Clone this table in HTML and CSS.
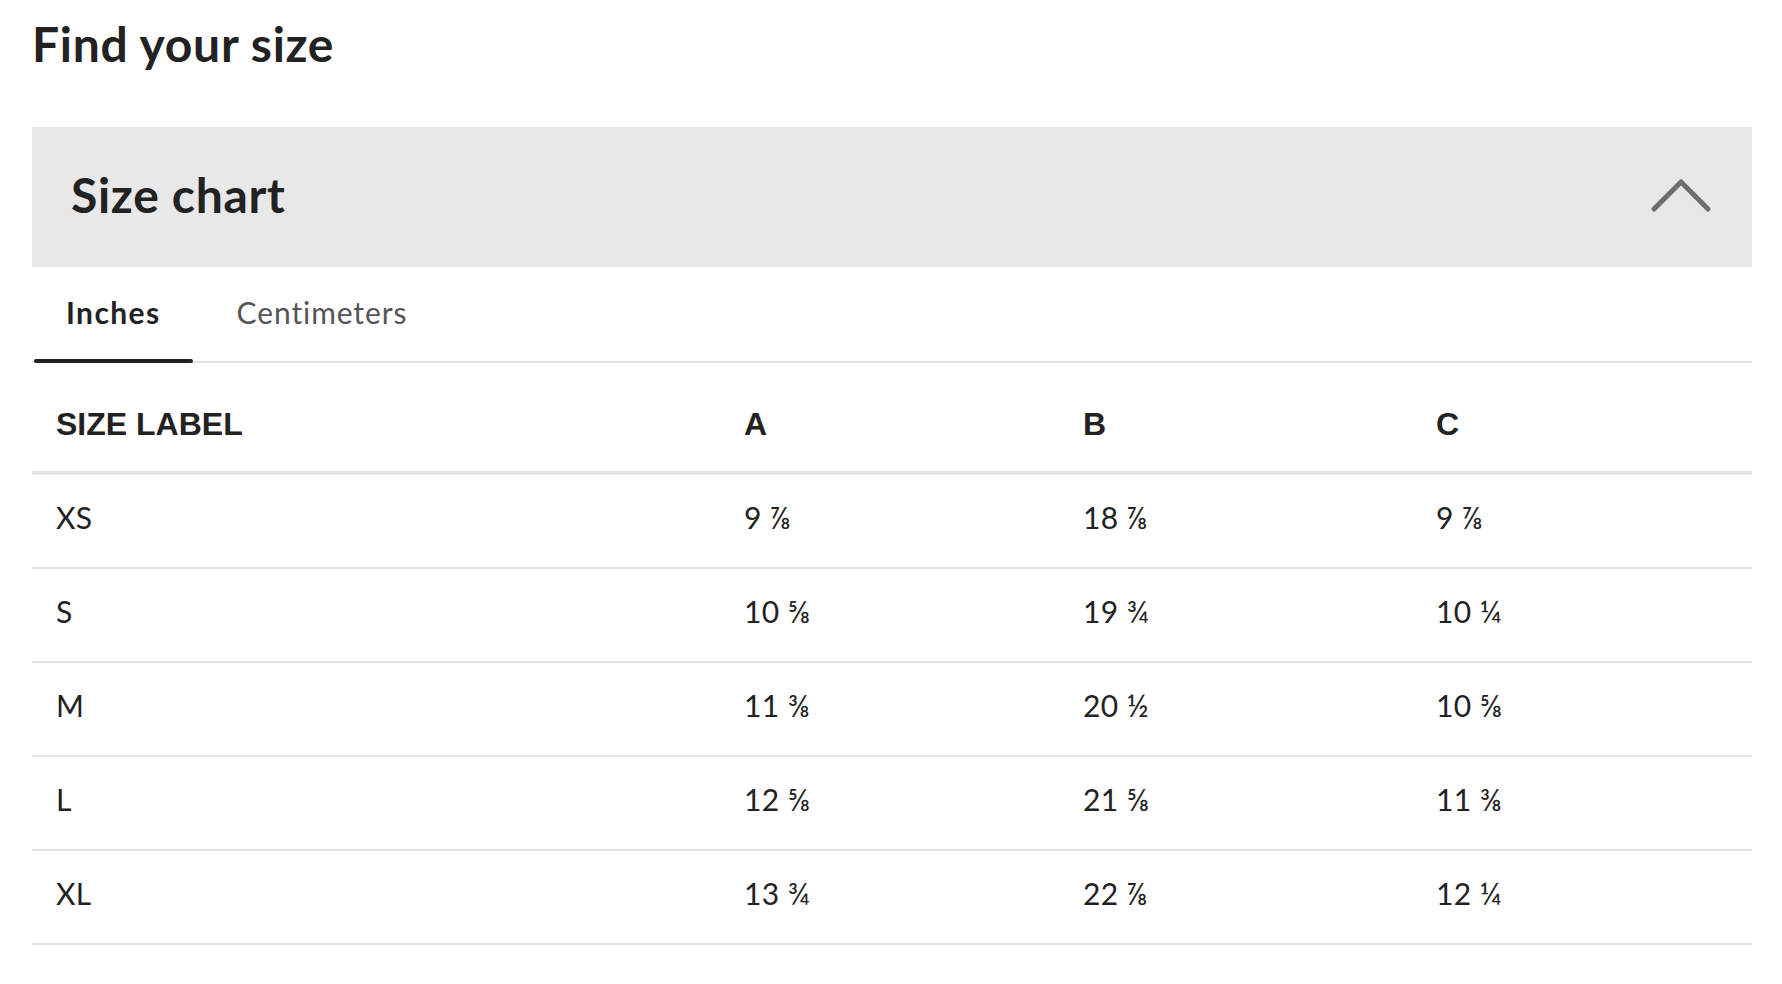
FILE: index.html
```html
<!DOCTYPE html>
<html lang="en">
<head>
<meta charset="utf-8">
<title>Find your size</title>
<link rel="stylesheet" href="styles.css">
</head>
<body>
<main class="page">
  <h1 class="title">Find your size</h1>
  <section class="chart">
    <div class="chart-head">
      <h2 class="chart-title">Size chart</h2>
      <svg class="chevron" width="62" height="36" viewBox="0 0 62 36" aria-hidden="true">
        <polyline points="4,32 31,5 58,32" fill="none" stroke="#6e6e6e" stroke-width="5" stroke-linecap="round" stroke-linejoin="round"/>
      </svg>
    </div>
    <div class="tabs">
      <button class="tab tab-active">Inches</button>
      <button class="tab">Centimeters</button>
    </div>
    <table class="sizes">
      <colgroup>
        <col class="col-label">
        <col class="col-a">
        <col class="col-b">
        <col class="col-c">
      </colgroup>
      <thead>
        <tr><th>SIZE LABEL</th><th>A</th><th>B</th><th>C</th></tr>
      </thead>
      <tbody>
        <tr><td>XS</td><td>9 ⅞</td><td>18 ⅞</td><td>9 ⅞</td></tr>
        <tr><td>S</td><td>10 ⅝</td><td>19 ¾</td><td>10 ¼</td></tr>
        <tr><td>M</td><td>11 ⅜</td><td>20 ½</td><td>10 ⅝</td></tr>
        <tr><td>L</td><td>12 ⅝</td><td>21 ⅝</td><td>11 ⅜</td></tr>
        <tr><td>XL</td><td>13 ¾</td><td>22 ⅞</td><td>12 ¼</td></tr>
      </tbody>
    </table>
  </section>
</main>
</body>
</html>
```
FILE: styles.css
```css
html, body {
  margin: 0;
  padding: 0;
  background: #ffffff;
}

body {
  font-family: Lato, "Open Sans", sans-serif;
  color: #222222;
}

.page {
  padding: 0 30px 0 32px;
}

.title {
  margin: 15px 0 54px 0;
  font-size: 48px;
  line-height: 58px;
  font-weight: 700;
  letter-spacing: 0.7px;
  color: #222222;
}

.chart-head {
  height: 140px;
  box-sizing: border-box;
  background: #e8e8e8;
  display: flex;
  align-items: center;
  justify-content: space-between;
  padding: 0 40px 5px 39px;
}

.chart-title {
  margin: 0;
  font-size: 48px;
  line-height: 56px;
  font-weight: 700;
  letter-spacing: 0.7px;
  color: #222222;
}

.chevron {
  display: block;
}

.tabs {
  display: flex;
  gap: 12px;
  border-bottom: 2px solid #e4e4e4;
  padding-left: 2px;
  height: 94px;
}

.tab {
  position: relative;
  font-family: Lato, "Open Sans", sans-serif;
  font-size: 30px;
  line-height: 36px;
  font-weight: 400;
  letter-spacing: 0.9px;
  color: #555555;
  background: none;
  border: 0;
  margin: 0 0 -2px 0;
  padding: 27px 32px 33px 32px;
  cursor: pointer;
}

.tab-active {
  font-weight: 700;
  letter-spacing: 1.4px;
  color: #222222;
}

.tab-active::after {
  content: "";
  position: absolute;
  left: 0;
  right: 0;
  bottom: 0;
  height: 4px;
  border-radius: 2px;
  background: #222222;
}

.sizes {
  width: 100%;
  table-layout: fixed;
  border-collapse: collapse;
}

.col-label { width: 688px; }
.col-a { width: 339px; }
.col-b { width: 353px; }
.col-c { width: 340px; }

.sizes th {
  font-family: "Liberation Sans", Arial, sans-serif;
  font-size: 32px;
  line-height: 36px;
  font-weight: 700;
  text-align: left;
  color: #222222;
  padding: 43px 0 29px 24px;
  border-bottom: 4px solid #e4e4e4;
}

.sizes td {
  font-size: 30px;
  line-height: 36px;
  font-weight: 400;
  letter-spacing: 0.4px;
  color: #222222;
  padding: 24px 0 32px 24px;
  border-bottom: 2px solid #e4e4e4;
}
```
